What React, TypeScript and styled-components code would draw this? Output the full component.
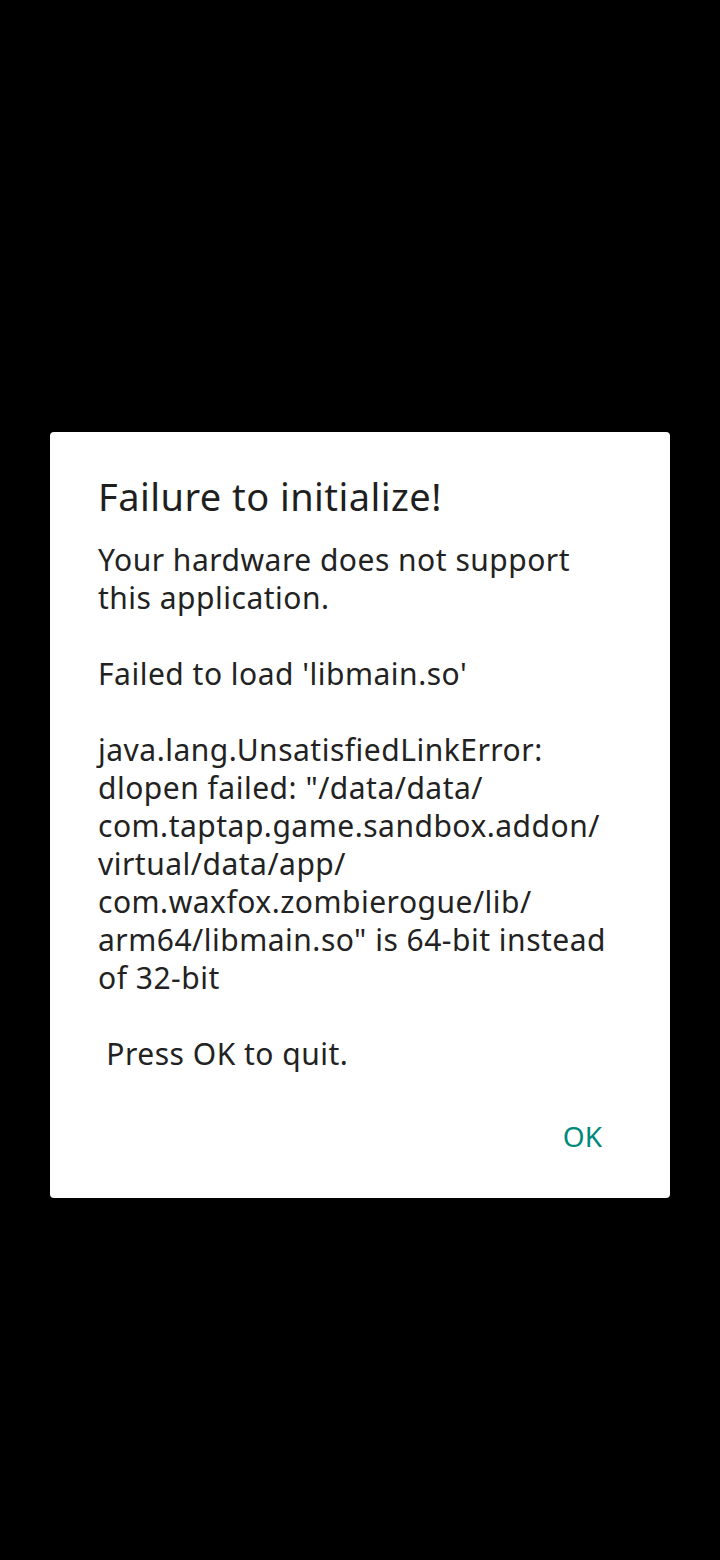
import React from "react";
import styled, { createGlobalStyle } from "styled-components";

const Global = createGlobalStyle`
  html, body { margin: 0; padding: 0; background: #000; }
  body { font-family: "Noto Sans", "Liberation Sans", sans-serif; }
`;

const Screen = styled.div`
  width: 720px;
  height: 1560px;
  background: #000;
  display: flex;
  justify-content: center;
  padding-top: 432px;
  box-sizing: border-box;
`;

const Dialog = styled.div`
  width: 620px;
  height: 766px;
  background: #fff;
  border-radius: 4px;
  box-sizing: border-box;
  padding: 38px 48px 0 48px;
  display: flex;
  flex-direction: column;
`;

const Title = styled.h1`
  margin: 0;
  font-family: "Noto Sans", sans-serif;
  font-weight: 400;
  font-size: 38px;
  letter-spacing: 0.45px;
  line-height: 52px;
  color: #1f1f1f;
`;

const Message = styled.div`
  margin-top: 19px;
  font-family: "Noto Sans", sans-serif;
  font-size: 30px;
  letter-spacing: 0.5px;
  line-height: 38px;
  color: #222;
  white-space: pre-wrap;
`;

const Actions = styled.div`
  display: flex;
  justify-content: flex-end;
  margin-top: 44px;
  margin-right: 20px;
`;

const Button = styled.button`
  background: none;
  border: none;
  padding: 0;
  font-family: "Noto Sans", sans-serif;
  font-size: 28px;
  line-height: 38px;
  color: #00897b;
`;

const lines = [
  "Your hardware does not support",
  "this application.",
  "",
  "Failed to load 'libmain.so'",
  "",
  "java.lang.UnsatisfiedLinkError:",
  "dlopen failed: \"/data/data/",
  "com.taptap.game.sandbox.addon/",
  "virtual/data/app/",
  "com.waxfox.zombierogue/lib/",
  "arm64/libmain.so\" is 64-bit instead",
  "of 32-bit",
  "",
  " Press OK to quit.",
];

export default function App() {
  return (
    <>
      <Global />
      <Screen>
        <Dialog>
          <Title>Failure to initialize!</Title>
          <Message>{lines.join("\n")}</Message>
          <Actions>
            <Button>OK</Button>
          </Actions>
        </Dialog>
      </Screen>
    </>
  );
}
